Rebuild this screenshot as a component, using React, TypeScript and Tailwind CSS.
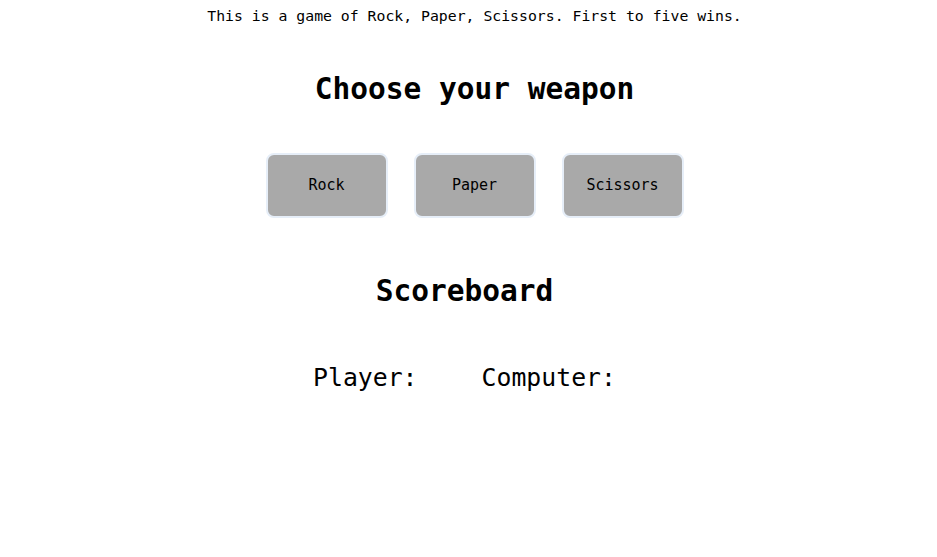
import React from "react";

// Rock, Paper, Scissors — landing view
const WEAPONS = ["Rock", "Paper", "Scissors"];

export default function App() {
  return (
    <div className="min-h-[557px] w-full bg-white text-black font-['DejaVu_Sans_Mono','Liberation_Mono',monospace]">
      <div className="flex flex-col items-center pl-[12px]">
        {/* ── Intro ─────────────────────────────────────── */}
        <p className="mt-[7px] text-[14.8px] leading-[18px]">
          This is a game of Rock, Paper, Scissors. First to five wins.
        </p>

        {/* ── Weapon picker ─────────────────────────────── */}
        <h1 className="mt-[46px] text-[29.5px] font-bold leading-[36px]">
          Choose your weapon
        </h1>

        <div className="mt-[46px] flex gap-[26px]">
          {WEAPONS.map((w) => (
            <button
              key={w}
              className="flex h-[65px] w-[122px] items-center justify-center rounded-lg border-2 border-[#e6eef8] bg-[#a9a9a9] text-[15px] text-black"
            >
              {w}
            </button>
          ))}
        </div>
      </div>

      {/* ── Scoreboard ──────────────────────────────────── */}
      <div className="flex flex-col items-center pr-[8px]">
        <h2 className="mt-[55px] text-[29.5px] font-bold leading-[36px]">
          Scoreboard
        </h2>
        <div className="mt-[54px] flex gap-[64px] text-[24.8px] leading-[30px]">
          <span>Player:</span>
          <span>Computer:</span>
        </div>
      </div>
    </div>
  );
}
